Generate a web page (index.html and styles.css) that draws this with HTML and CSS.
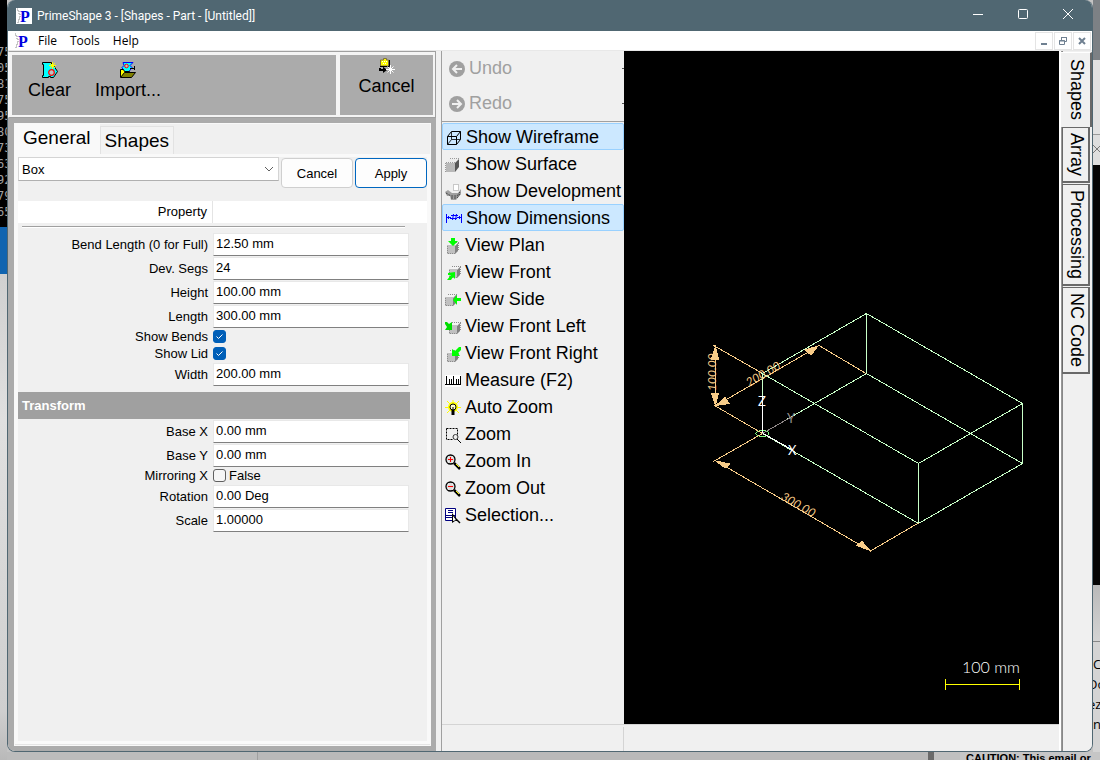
FILE: index.html
```html
<!DOCTYPE html>
<html lang="en">
<head>
<meta charset="utf-8">
<title>PrimeShape 3 - [Shapes - Part - [Untitled]]</title>
<link rel="stylesheet" href="styles.css">
</head>
<body>
<svg class="defs" aria-hidden="true">
  <symbol id="logo" viewBox="0 0 16 16">
    <path d="M1 1h1v2h1v3h1v4h-1v3h-1v2h-1" fill="none" stroke="#8a8a8a" stroke-dasharray="1 1"/>
    <text x="4" y="14" class="logo-letter">P</text>
  </symbol>
  <symbol id="cube" viewBox="0 0 12 12">
    <path d="M0 4h8v8h-8z" fill="#c0c0c0"/>
    <path d="M0 4l3-3h8l-3 3z" fill="#f4f4f4"/>
    <path d="M8 4l3-3v8l-3 3z" fill="#808080"/>
    <path d="M0.5 3.5h8M3 0.5h9M0.5 4v8M11.5 1v8M1 11.5h8" stroke="#8c8c8c" stroke-dasharray="1 1" fill="none"/>
  </symbol>
  <symbol id="lens" viewBox="0 0 16 16">
    <path d="M9 9l6 6" stroke="#000" stroke-width="2.500"/>
    <path d="M11 10l3 3" stroke="#ff0" stroke-width="1"/>
    <circle cx="5.500" cy="5.500" r="4.500" fill="#dcdcdc" stroke="#000" stroke-width="1.300"/>
    <path d="M3 3h1M7 3h1M3 8h1M7 8h1" stroke="#fff"/>
  </symbol>
</svg>

<div class="desktop">
  <div class="behind behind-left" aria-hidden="true">
    <div class="console"><span>75</span><span>05</span><span>81</span><span>75</span><span>95</span><span>80</span><span>73</span><span>63</span><span>92</span><span>79</span><span>65</span></div>
    <div class="strip-blue"></div>
    <div class="strip-grey"></div>
  </div>

  <main class="window">
    <header class="titlebar">
      <svg class="logo logo-boxed"><use href="#logo"/></svg>
      <h1 class="title">PrimeShape 3 - [Shapes - Part - [Untitled]]</h1>
      <div class="caption-buttons">
        <button type="button" aria-label="Minimize"><svg width="12" height="12"><path d="M1 6.500h10"/></svg></button>
        <button type="button" aria-label="Maximize"><svg width="12" height="12"><rect x="1.500" y="1.500" width="9" height="9" rx="1"/></svg></button>
        <button type="button" aria-label="Close"><svg width="12" height="12"><path d="M1 1l10 10M11 1L1 11"/></svg></button>
      </div>
    </header>

    <nav class="menubar">
      <svg class="logo"><use href="#logo"/></svg>
      <button type="button">File</button>
      <button type="button">Tools</button>
      <button type="button">Help</button>
      <div class="child-buttons">
        <button type="button" aria-label="Minimize child"><svg width="10" height="10"><path d="M2 8h6" stroke-width="2"/></svg></button>
        <button type="button" aria-label="Restore child"><svg width="10" height="10"><path d="M3.500 4V1.500h5v4H7M3 1.500h6M1.500 4.500h5v4h-5zM1 5h6" stroke-width="1"/></svg></button>
        <button type="button" aria-label="Close child"><svg width="10" height="10"><path d="M2 2l6 6M8 2L2 8" stroke-width="2"/></svg></button>
      </div>
    </nav>

    <div class="workspace">
      <section class="side">
        <div class="commands">
          <div class="command-group command-group-main">
            <button type="button" class="command">
              <svg class="icon" viewBox="0 0 16 16"><path d="M.5.500h9v3h2l4 6-4 6h-3v-1h-2v1h-6v-2h1v-11h-1z" fill="#0ff" stroke="#000"/><path d="M10.500 0v7M7 3.500h7M8 1l5 5M13 1L8 6" stroke="#ff0" stroke-width="1"/><circle cx="9.500" cy="10.500" r="2.800" fill="#c0c0c0" stroke="#f00" stroke-width="1.200"/></svg>
              <span>Clear</span>
            </button>
            <button type="button" class="command">
              <svg class="icon" viewBox="0 0 16 16"><path d="M3 .5h10l-3 3 2 2-3 4H4l-2-4 2-2z" fill="#0ff" stroke="#00f"/><circle cx="6.500" cy="4" r="1.800" fill="#c0c0c0" stroke="#f00"/><path d="M.5 15V7.500h3l1 2h5v3" fill="#ff0" stroke="#000"/><path d="M.5 15.500l4-5h11l-4 5z" fill="#808000" stroke="#000"/><path d="M10 6.500h4M14.500 4v4" stroke="#000" fill="none"/></svg>
              <span>Import...</span>
            </button>
          </div>
          <div class="command-group command-group-cancel">
            <button type="button" class="command">
              <svg class="icon" viewBox="0 0 16 16"><path d="M1.500 2h3V.5h3V2h2v6h-8z" fill="#ff0" stroke="#807040"/><path d="M3 3.500h1M5 3.500h1M7 3.500h1M4 5.500h1M6 5.500h1" stroke="#fff"/><path d="M1 8.500h9.500V2" stroke="#000" fill="none"/><path d="M1 10v2h4" stroke="#000" stroke-width="2" fill="none"/><path d="M4 8.500l4 3.500-4 3z"/><path d="M11.500 7v9M7 11.500h9M8.500 8.500l6 6M14.500 8.500l-6 6" stroke="#fff"/></svg>
              <span>Cancel</span>
            </button>
          </div>
        </div>

        <div class="panel">
          <div class="tabs" role="tablist">
            <button type="button" role="tab" aria-selected="true" class="tab tab-active">General</button>
            <button type="button" role="tab" aria-selected="false" class="tab">Shapes</button>
          </div>
          <form class="page">
            <div class="page-inner">
              <div class="chooser">
                <select class="combo" aria-label="Shape"><option>Box</option></select>
                <button type="button" class="btn">Cancel</button>
                <button type="button" class="btn btn-default">Apply</button>
              </div>
              <div class="prop-head"><span>Property</span></div>
              <hr class="rule">
              <div class="props">
                <div class="prop"><label for="bend">Bend Length (0 for Full)</label><input id="bend" type="text" value="12.50 mm"></div>
                <div class="prop"><label for="segs">Dev. Segs</label><input id="segs" type="text" value="24"></div>
                <div class="prop"><label for="height">Height</label><input id="height" type="text" value="100.00 mm"></div>
                <div class="prop"><label for="length">Length</label><input id="length" type="text" value="300.00 mm"></div>
                <div class="prop prop-check"><label for="bends">Show Bends</label><span><input id="bends" type="checkbox" checked></span></div>
                <div class="prop prop-check"><label for="lid">Show Lid</label><span><input id="lid" type="checkbox" checked></span></div>
                <div class="prop"><label for="width">Width</label><input id="width" type="text" value="200.00 mm"></div>
              </div>
              <h2 class="section">Transform</h2>
              <div class="props">
                <div class="prop"><label for="basex">Base X</label><input id="basex" type="text" value="0.00 mm"></div>
                <div class="prop"><label for="basey">Base Y</label><input id="basey" type="text" value="0.00 mm"></div>
                <div class="prop prop-check"><label for="mirror">Mirroring X</label><span><input id="mirror" type="checkbox">False</span></div>
                <div class="prop"><label for="rotation">Rotation</label><input id="rotation" type="text" value="0.00 Deg"></div>
                <div class="prop"><label for="scale">Scale</label><input id="scale" type="text" value="1.00000"></div>
              </div>
            </div>
          </form>
        </div>
      </section>

      <section class="work">
        <div class="work-main">
          <div class="tools">
            <div class="history">
              <button type="button" disabled><svg class="icon" viewBox="0 0 16 16"><circle cx="8" cy="8" r="8" fill="#a0a0a0"/><path d="M13 8H4M8 4L4 8l4 4" stroke="#f0f0f0" stroke-width="2" fill="none"/></svg>Undo</button>
              <button type="button" disabled><svg class="icon" viewBox="0 0 16 16"><circle cx="8" cy="8" r="8" fill="#a0a0a0"/><path d="M3 8h9M8 4l4 4-4 4" stroke="#f0f0f0" stroke-width="2" fill="none"/></svg>Redo</button>
            </div>
            <div class="toollist">
              <button type="button" class="tool tool-on" aria-pressed="true"><svg class="icon" viewBox="0 0 16 16"><path d="M1.500 6.500h9v8h-9zM5.500 1.500h9v8l-4 5M1.500 6.500l4-5M10.500 6.500l4-5" fill="none" stroke="#000"/><path d="M5.500 2v7.500h9M5.500 9.500l-4 5" fill="none" stroke="#000" stroke-width=".8"/></svg>Show Wireframe</button>
              <button type="button" class="tool" aria-pressed="false"><svg class="icon" viewBox="0 0 16 16"><path d="M1 6h9v9H1z" fill="#b8b8b8"/><path d="M1 6l4-4h9l-4 4z" fill="#ececec"/><path d="M10 6l4-4v8l-4 5z" fill="#555"/><path d="M1 5.500h9M5 1.500h9M.5 6v9" stroke="#999" stroke-dasharray="1 1"/></svg>Show Surface</button>
              <button type="button" class="tool" aria-pressed="false"><svg class="icon" viewBox="0 0 16 16"><path d="M8.500.500h5v6h-5z" fill="#fff" stroke="#999" stroke-dasharray="1 1"/><path d="M0 8l3-2 4 3h6l3-4v5l-5 6H6l-1-4H2z" fill="#a0a0a0"/><path d="M1 9l5 3h6l3-4M6 14h6l3-4" stroke="#444" stroke-dasharray="2 1" fill="none"/></svg>Show Development</button>
              <button type="button" class="tool tool-on" aria-pressed="true"><svg class="icon" viewBox="0 0 16 16"><path d="M.5 3v9M15.500 3v9M1 6.500h4M11 6.500h4M2.500 5v3M13.500 5v3M7.500 3l-1 6M10.500 3l-1 6M5 4.500h7M4 7.500h7" stroke="#00f" fill="none"/></svg>Show Dimensions</button>
              <button type="button" class="tool"><svg class="icon" viewBox="0 0 16 16"><use href="#cube" x="2" y="4" width="12" height="12"/><path d="M6 0h4v3h3L8 8 3 3h3z" fill="#0f0"/></svg>View Plan</button>
              <button type="button" class="tool"><svg class="icon" viewBox="0 0 16 16"><use href="#cube" x="4" y="1" width="12" height="12"/><path d="M2 15l4-5H3V8l7-1v7l-2-2-2 3z" fill="#0f0"/></svg>View Front</button>
              <button type="button" class="tool"><svg class="icon" viewBox="0 0 16 16"><use href="#cube" x="0" y="2" width="12" height="12"/><path d="M8 8l4-5v3h4v3h-4v4z" fill="#0f0"/></svg>View Side</button>
              <button type="button" class="tool"><svg class="icon" viewBox="0 0 16 16"><use href="#cube" x="4" y="3" width="12" height="12"/><path d="M0 3h2l2 2 3-2v8H0l2-3-2-3z" fill="#0d0"/></svg>View Front Left</button>
              <button type="button" class="tool"><svg class="icon" viewBox="0 0 16 16"><use href="#cube" x="2" y="4" width="12" height="12"/><path d="M16 1v3l-3 3 2 3H7V3l3 2 4-4z" fill="#0f0"/></svg>View Front Right</button>
              <button type="button" class="tool"><svg class="icon" viewBox="0 0 16 16"><path d="M0 2h16v12H0z" fill="#fff"/><path d="M0 11.500h16M1.500 3v9M4.500 6v6M6.500 6v6M8.500 3v9M11.500 6v6M13.500 6v6M15.500 3v9" stroke="#000"/></svg>Measure (F2)</button>
              <button type="button" class="tool"><svg class="icon" viewBox="0 0 16 16"><path d="M2 1l12 12M14 1L2 13M8 0v3M0 7.500h16" stroke="#ff0"/><circle cx="8" cy="7" r="5" fill="#ff0"/><circle cx="8" cy="7" r="3" fill="#ffc" stroke="#000"/><path d="M6.500 10h3v5h-3z"/><path d="M8 7v4" stroke="#000"/></svg>Auto Zoom</button>
              <button type="button" class="tool"><svg class="icon" viewBox="0 0 16 16"><path d="M1.500 1.500h11v6M1.500 1.500v11h6" fill="none" stroke="#000" stroke-dasharray="2 1"/><circle cx="10.500" cy="10" r="2.500" fill="none" stroke="#333"/><path d="M12 12l4 4" stroke="#000"/></svg>Zoom</button>
              <button type="button" class="tool"><svg class="icon" viewBox="0 0 16 16"><use href="#lens" width="16" height="16"/><path d="M3 5.500h5M5.500 3v5" stroke="#f00"/></svg>Zoom In</button>
              <button type="button" class="tool"><svg class="icon" viewBox="0 0 16 16"><use href="#lens" width="16" height="16"/><path d="M3 5.500h5" stroke="#f00"/></svg>Zoom Out</button>
              <button type="button" class="tool"><svg class="icon" viewBox="0 0 16 16"><path d="M.5.500h10v12H.5z" fill="#fff" stroke="#000080"/><path d="M3 2.500h5M3 4.500h5M1 7.500h9M1 9.500h7" stroke="#000080"/><path d="M7 5v10l3-2h3l-2-3z" fill="#000"/><path d="M8 8v5l3-1z" fill="#fff"/><path d="M11 11l4 4" stroke="#000" stroke-width="1.500"/></svg>Selection...</button>
            </div>
          </div>

          <div class="viewer">
            <svg class="scene" viewBox="624 51 435 673" role="img" aria-label="Wireframe box with dimensions">
              <g class="wire">
                <path d="M866.500 313.500l156 90l-104 60l-156 -90z"/>
                <path d="M866.500 373.500l156 90l-104 60l-156 -90z"/>
                <path d="M866.500 313.500v60M1022.500 403.500v60M918.500 463.500v60M762.500 373.500v60"/>
                <ellipse class="origin" cx="762.500" cy="433.500" rx="6.500" ry="3"/>
              </g>
              <g class="dims">
                <path d="M713.500 345.500l49 28M714.500 405.500l48 28M715.500 347v58M819 345.500l47 28M716 405.500l102-59M713.500 461.500l49-28M716 461l154.500 90l48-28"/>
                <path class="head" d="M715.500 347l-4 12h7zM715.500 405l-4-12h7zM818 346l-13 4 6 5zM716 405.500l9-8 4 6zM716 461l9 7 5-4zM870 550.500l-13-5 5-4z"/>
                <text transform="translate(716 391) rotate(-90)">100.00</text>
                <text transform="translate(749 387) rotate(-30)">200.00</text>
                <text transform="translate(780 499) rotate(30)">300.00</text>
              </g>
              <g class="axes">
                <path d="M762.500 396v37l30 17"/>
                <path class="axis-y" d="M762.500 433.500l28-16"/>
                <text x="758" y="406">Z</text>
                <text class="axis-y-label" x="787" y="423">Y</text>
                <text x="788" y="455">X</text>
              </g>
              <text class="scale-text" x="962" y="673">100 mm</text>
              <path class="scale-bar" d="M945.500 679v11M1019.500 679v11M945 684.500h75"/>
            </svg>
          </div>
        </div>
        <footer class="status"><div></div><div></div></footer>
      </section>

      <div class="vtabs" role="tablist" aria-label="Modes">
        <button type="button" role="tab" aria-selected="true" class="vtab vtab-active">Shapes</button>
        <button type="button" role="tab" aria-selected="false" class="vtab">Array</button>
        <button type="button" role="tab" aria-selected="false" class="vtab">Processing</button>
        <button type="button" role="tab" aria-selected="false" class="vtab">NC Code</button>
      </div>
    </div>
  </main>

  <div class="behind behind-right" aria-hidden="true">
    <div class="r-dark"></div>
    <div class="r-light"></div>
    <div class="r-close"><svg width="7" height="10"><path d="M0 1l8 8M0 9l8-8" stroke="#777"/></svg></div>
    <div class="r-black"></div>
    <div class="r-grey"></div>
    <div class="r-mail"><span>C</span><span class="cut">Do</span><span class="cut">ez</span><span>n</span></div>
  </div>
  <div class="behind behind-bottom" aria-hidden="true"><div class="b-one"></div><div class="b-two"></div><div class="b-three"></div><div class="b-mail">CAUTION: This email or</div></div>
</div>
</body>
</html>
```

FILE: styles.css
```css
* { box-sizing: border-box; }

body {
  margin: 0;
  background: #c4c4c4;
  color: #000;
  font-family: "Liberation Sans", Arial, sans-serif;
  font-size: 13px;
}

button, input, select {
  font: inherit;
  color: inherit;
  margin: 0;
  padding: 0;
  border: 0;
  background: none;
  border-radius: 0;
}

.defs { display: none; }

.icon {
  width: 16px;
  height: 16px;
  flex: none;
}

/* Desktop and what shows round the window */
.desktop {
  display: grid;
  grid-template-columns: 7px minmax(0, 1fr) 7px;
  grid-template-rows: 1fr 8px;
  min-height: 100vh;
}

.behind {
  display: flex;
  overflow: hidden;
}

.behind-left, .behind-right { flex-direction: column; }
.behind-left { grid-row: 1 / 3; }
.behind-right { grid-row: 1; grid-column: 3; }
.behind-bottom { grid-row: 2; grid-column: 2 / 4; background: #b9b9b9; }

.console {
  display: flex;
  flex-direction: column;
  height: 227px;
  padding-top: 44px;
  background: #000;
  color: #a0a0a0;
  font-family: "DejaVu Sans Mono", monospace;
  font-size: 12px;
  line-height: 16px;
}

.console span { margin-left: -3px; }
.strip-blue { height: 47px; background: #1064b0; }
.strip-grey { flex: 1; background: linear-gradient(#d0d0d0, #e0e0e0 30%, #cfcfcf 90%, #b9b9b9); }

.r-dark { height: 60px; background: #7d8185; }
.r-light { height: 75px; background: #e2e2e2; border-bottom: 1px solid #9a9a9a; }
.r-close { height: 30px; padding-top: 9px; background: #dedede; }
.r-close svg { display: block; }
.r-black { height: 420px; background: #050505; }
.r-grey { height: 57px; background: linear-gradient(#b9b9b9, #d4d4d4); border-bottom: 1px solid #888; }
.r-mail {
  display: flex;
  flex: 1;
  flex-direction: column;
  padding-top: 12px;
  background: #d4d4d4;
  font-family: "Open Sans", sans-serif;
  line-height: 20px;
}
.r-mail .cut { margin-left: -5px; }

.b-one { width: 251px; background: #bcbcbc; border-right: 1px solid #a0a0a0; }
.b-two { flex: 1; }
.b-three { width: 32px; border-left: 6px solid #6a6a6a; background: #c0c0c0; }
.b-mail {
  width: 140px;
  padding-left: 6px;
  background: #c6c6c6;
  font-size: 11px;
  font-weight: bold;
  line-height: 12px;
  white-space: nowrap;
}

/* Window frame */
.window {
  grid-column: 2;
  display: flex;
  flex-direction: column;
  border: 1px solid #506772;
  border-top: 0;
  border-radius: 8px;
  background: #f0f0f0;
  overflow: hidden;
}

.titlebar {
  display: flex;
  align-items: center;
  height: 31px;
  padding: 0 2px 0 8px;
  background: #506772;
  color: #fff;
}

.logo { width: 16px; height: 16px; flex: none; }
.logo-boxed { background: #fff; }
.logo-letter { font: bold 16px "Liberation Serif", serif; fill: #0000e0; }

.title {
  flex: 1;
  margin: 0 0 0 5px;
  font: 12px Roboto, sans-serif;
}

.caption-buttons { display: flex; height: 100%; }
.caption-buttons button { width: 45px; }
.caption-buttons svg { fill: none; stroke: #fff; }

.menubar {
  display: flex;
  align-items: center;
  gap: 13px;
  height: 20px;
  padding: 0 1px 0 6px;
  background: #fff;
  border-bottom: 1px solid #e8e8e8;
  font: 12px "Open Sans", sans-serif;
}

.menubar .logo { margin-right: -5px; }
.child-buttons { display: flex; gap: 1px; margin-left: auto; }
.child-buttons button {
  display: grid;
  place-items: center;
  width: 18px;
  height: 18px;
  border: 1px solid #e4e4e4;
}
.child-buttons svg { fill: none; stroke: #6f8091; }

.workspace {
  flex: 1;
  display: grid;
  grid-template-columns: 428px minmax(0, 1fr) 33px;
}

/* Left side */
.side {
  display: flex;
  flex-direction: column;
  background: #ababab;
}

.commands {
  display: grid;
  grid-template-columns: minmax(0, 1fr) 93px;
  gap: 4px;
  height: 67px;
  padding: 3px 2px 2px 3px;
  border: 1px solid #a0a0a0;
  border-left-color: #f8f8f8;
  background: #f4f4f4;
}

.command-group {
  display: flex;
  align-items: flex-start;
  gap: 24px;
  background: #ababab;
  font-size: 18px;
}
.command-group-main { padding: 7px 16px; }
.command-group-cancel { justify-content: center; padding-top: 3px; }

.command {
  display: flex;
  flex-direction: column;
  align-items: center;
  line-height: 25px;
}

.panel {
  flex: 1;
  display: flex;
  flex-direction: column;
  margin: 5px 5px 5px 6px;
  background: #f0f0f0;
  border: 1px solid #f8f8f8;
}

.tabs {
  display: flex;
  align-items: flex-end;
  height: 30px;
  font-size: 19px;
}

.tab {
  height: 28px;
  padding: 0 4px;
  border: 1px solid #e2e2e2;
  border-bottom: 0;
  background: #f3f3f3;
}

.tab-active {
  height: 30px;
  padding: 0 9px 3px 8px;
  border: 0;
  background: #f9f9f9;
}

.page {
  flex: 1;
  display: flex;
  padding: 3px;
  border-bottom: 1px solid #e4e4e4;
  background: #f9f9f9;
}

.page-inner { flex: 1; background: #f0f0f0; }

.chooser {
  display: flex;
  align-items: flex-start;
  gap: 2px;
}

.combo {
  flex: 1;
  height: 24px;
  padding: 0 3px;
  appearance: none;
  border: 1px solid #d4d4d4;
  border-bottom-color: #b0b0b0;
  background: #fff url("data:image/svg+xml,%3Csvg xmlns='http://www.w3.org/2000/svg' width='10' height='6'%3E%3Cpath d='M1 1l4 4 4-4' fill='none' stroke='%23606060'/%3E%3C/svg%3E") no-repeat right 4px center;
}

.btn {
  width: 72px;
  height: 30px;
  margin-top: 1px;
  border: 1px solid #cfcfcf;
  border-radius: 4px;
  background: #fdfdfd;
}
.btn-default { border-color: #0067c0; }

.prop-head {
  height: 22px;
  margin-top: 13px;
  background: #fff;
  line-height: 22px;
}
.prop-head span {
  display: block;
  width: 195px;
  padding-right: 5px;
  border-right: 1px solid #e4e4e4;
  text-align: right;
}

.rule {
  height: 2px;
  margin: 3px 22px 4px 4px;
  border: 0;
  border-top: 1px solid #a0a0a0;
  background: #fff;
}

.props { margin-right: 18px; }

.prop {
  display: grid;
  grid-template-columns: 190px minmax(0, 1fr);
  column-gap: 5px;
  align-items: center;
  height: 24px;
  padding-top: 1px;
}
.prop label { text-align: right; white-space: nowrap; }
.prop input[type="text"] {
  height: 23px;
  width: 100%;
  padding: 0 2px 2px;
  border: 1px solid #e8e8e8;
  border-bottom-color: #808080;
  background: #fff;
}

.prop-check { height: 17px; padding: 0; }
.prop-check span { display: flex; align-items: center; gap: 3px; }
.prop-check input {
  width: 13px;
  height: 13px;
  appearance: none;
  border: 1px solid #606060;
  border-radius: 3px;
  background: #f6f6f6;
}
.prop-check input:checked {
  border-color: #005fb8;
  background: #005fb8 url("data:image/svg+xml,%3Csvg xmlns='http://www.w3.org/2000/svg' width='9' height='7'%3E%3Cpath d='M1.500 3.500l2 2 4-4' fill='none' stroke='%23fff'/%3E%3C/svg%3E") no-repeat center;
}

.section {
  height: 27px;
  margin: 6px 17px 0 0;
  padding-left: 4px;
  background: #a0a0a0;
  color: #fff;
  font-size: 13px;
  line-height: 27px;
}

/* Tool list and viewer */
.work {
  display: flex;
  flex-direction: column;
  margin-left: 5px;
  border-left: 1px solid #a0a0a0;
}

.work-main {
  flex: 1;
  display: grid;
  grid-template-columns: 182px minmax(0, 1fr);
}

.tools { font-size: 18px; }

.history {
  height: 71px;
  border-bottom: 1px solid #a0a0a0;
}
.history button {
  display: flex;
  align-items: center;
  gap: 4px;
  width: 100%;
  height: 35px;
  padding-left: 7px;
  color: #a0a0a0;
}
.history button::after {
  content: "";
  width: 2px;
  height: 1px;
  margin-left: auto;
  background: #555;
}

.toollist { padding-top: 1px; }

.tool {
  display: flex;
  align-items: center;
  gap: 4px;
  width: 100%;
  height: 27px;
  padding: 2px 0 0 3px;
  white-space: nowrap;
}
.tool-on {
  border: 1px solid #99d1ff;
  border-radius: 2px;
  background: #cce8ff;
}

.viewer {
  display: flex;
  background: #000;
}
.scene {
  width: 100%;
  height: 100%;
  min-height: 300px;
  fill: none;
  shape-rendering: crispEdges;
  font-family: Lato, sans-serif;
}
.wire { stroke: #c8ffc8; }
.wire .origin { stroke: #80ff80; }
.dims { stroke: #f8cc88; }
.dims .head { fill: #f8cc88; }
.dims text { fill: #f8cc88; stroke: none; font-size: 12px; font-style: italic; }
.axes { stroke: #fff; }
.axes text { fill: #fff; stroke: none; font-size: 13px; }
.axes .axis-y { stroke: #908888; }
.axes .axis-y-label { fill: #908888; }
.scale-text { fill: #fff; font-size: 16px; font-weight: 300; }
.scale-bar { stroke: #ff0; }

.status {
  display: grid;
  grid-template-columns: 182px minmax(0, 1fr);
  height: 27px;
  padding-top: 2px;
  border-top: 1px solid #d4d4d4;
}
.status div:first-child { border-right: 1px solid #d4d4d4; }

/* Vertical tabs */
.vtabs {
  display: flex;
  flex-direction: column;
  gap: 1px;
  padding: 1px 2px 0 1px;
  background: linear-gradient(90deg, #fff 2px, #a0a0a0 2px, #808080 4px, #f0f0f0 4px);
  font-size: 18px;
}

.vtab {
  writing-mode: vertical-rl;
  margin-left: 2px;
  padding: 5px 0 5px 2px;
  border: 1px solid #696969;
  border-right-width: 2px;
  border-bottom-width: 2px;
  background: #f0f0f0;
  text-align: left;
  line-height: 23px;
}

.vtab-active {
  margin: 0 -2px -1px 0;
  padding: 6px 0 7px 2px;
  border-color: #fff #696969 #f0f0f0 #fff;
  border-bottom-width: 0;
}
```
